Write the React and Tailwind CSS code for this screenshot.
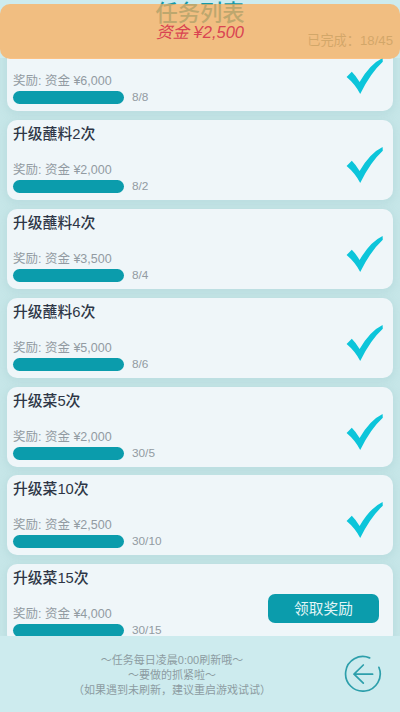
const tasks = [
  { title: '升级蘸料1次', reward: '¥6,000', progress: '8/8', done: true },
  { title: '升级蘸料2次', reward: '¥2,000', progress: '8/2', done: true },
  { title: '升级蘸料4次', reward: '¥3,500', progress: '8/4', done: true },
  { title: '升级蘸料6次', reward: '¥5,000', progress: '8/6', done: true },
  { title: '升级菜5次', reward: '¥2,000', progress: '30/5', done: true },
  { title: '升级菜10次', reward: '¥2,500', progress: '30/10', done: true },
  { title: '升级菜15次', reward: '¥4,000', progress: '30/15', done: false },
];

function CheckMark() {
  return (
    <svg className="mt-[26px] mr-[9px] h-[38px] w-[38px] shrink-0" viewBox="0 0 38 38" aria-hidden>
      <path
        d="M0.6 20 L5.8 14.8 Q10 19 13.6 25 Q24 7 36.6 1 L36.8 4.8 Q24.5 16 14.2 37 Q9.5 27.5 0.6 20 Z"
        fill="#0cc5da"
      />
    </svg>
  );
}

function BackIcon() {
  return (
    <svg
      className="h-[38px] w-[38px]"
      viewBox="0 0 38 38"
      fill="none"
      stroke="#2d9fab"
      strokeWidth="1.7"
      strokeLinecap="round"
      strokeLinejoin="round"
      aria-hidden
    >
      <path d="M25.6 2.9 A17.3 17.3 0 1 0 34.9 12.3" />
      <path d="M28.6 19.2 H10 M19.3 10 L10 19.2 L19.3 28.2" />
    </svg>
  );
}

function TaskCard({ task }) {
  return (
    <li className="flex h-20 shrink-0 justify-between rounded-[10px] bg-[#eff6f9] pl-1.5 shadow-[0_2px_6px_2px_rgba(165,207,210,0.35)]">
      <div>
        <h2 className="mt-[5px] text-[14.8px] leading-[18px] font-medium text-[#2e3646]">{task.title}</h2>
        <p className="mt-[19px] text-[12.5px] leading-4 text-[#929ba2]">奖励: 资金 {task.reward}</p>
        <div className="mt-[2px] flex items-center gap-2">
          <div className="h-[13px] w-[111px] rounded-full bg-[#0b9cac]" />
          <span className="text-[11.8px] leading-[13px] text-[#929ba2]">{task.progress}</span>
        </div>
      </div>
      {task.done ? (
        <CheckMark />
      ) : (
        <button className="mt-[30px] mr-3.5 h-[29px] w-[111px] rounded-[7px] bg-[#0b9cac] text-[14.7px] text-[#e2f5f7]">
          领取奖励
        </button>
      )}
    </li>
  );
}

export default function App() {
  return (
    <div className="relative flex h-[712px] w-[400px] flex-col overflow-hidden bg-[#cdebee] font-['Liberation_Sans','Noto_Sans_CJK_SC',sans-serif]">
      <header className="grid h-[58px] shrink-0 grid-cols-3 bg-[#cdebee]">
        <h1 className="col-start-2 text-center text-[22.3px] leading-[28px] font-medium text-[#159aa8]">任务列表</h1>
        <p className="mt-[33px] pr-[7px] text-right text-[13.2px] leading-4 whitespace-nowrap text-[#5f9a98]">
          已完成：18/45
        </p>
      </header>

      <main className="h-[578px] shrink-0 overflow-hidden bg-[#c6e6e8] px-[7px]">
        <ul className="-mt-[27px] flex flex-col gap-[8.9px]">
          {tasks.map((task) => (
            <TaskCard key={task.title} task={task} />
          ))}
        </ul>
      </main>

      <footer className="flex flex-1 items-start justify-between bg-[#cdebee]">
        <p className="mt-[17px] ml-[72px] w-[200px] text-center text-[11px] leading-[15px] whitespace-nowrap text-[#8c9ba1]">
          ～任务每日凌晨0:00刷新哦～
          <br />
          ～要做的抓紧啦～
          <br />
          （如果遇到未刷新，建议重启游戏试试）
        </p>
        <button className="mt-[19px] mr-[18px]" aria-label="返回">
          <BackIcon />
        </button>
      </footer>

      <div className="absolute inset-x-0 top-1 flex h-[55px] items-center justify-center rounded-[10px] bg-[#ffac58]/72">
        <span className="pt-px text-[16.5px] leading-5 text-[#d94452] italic">资金 ¥2,500</span>
      </div>
    </div>
  );
}
